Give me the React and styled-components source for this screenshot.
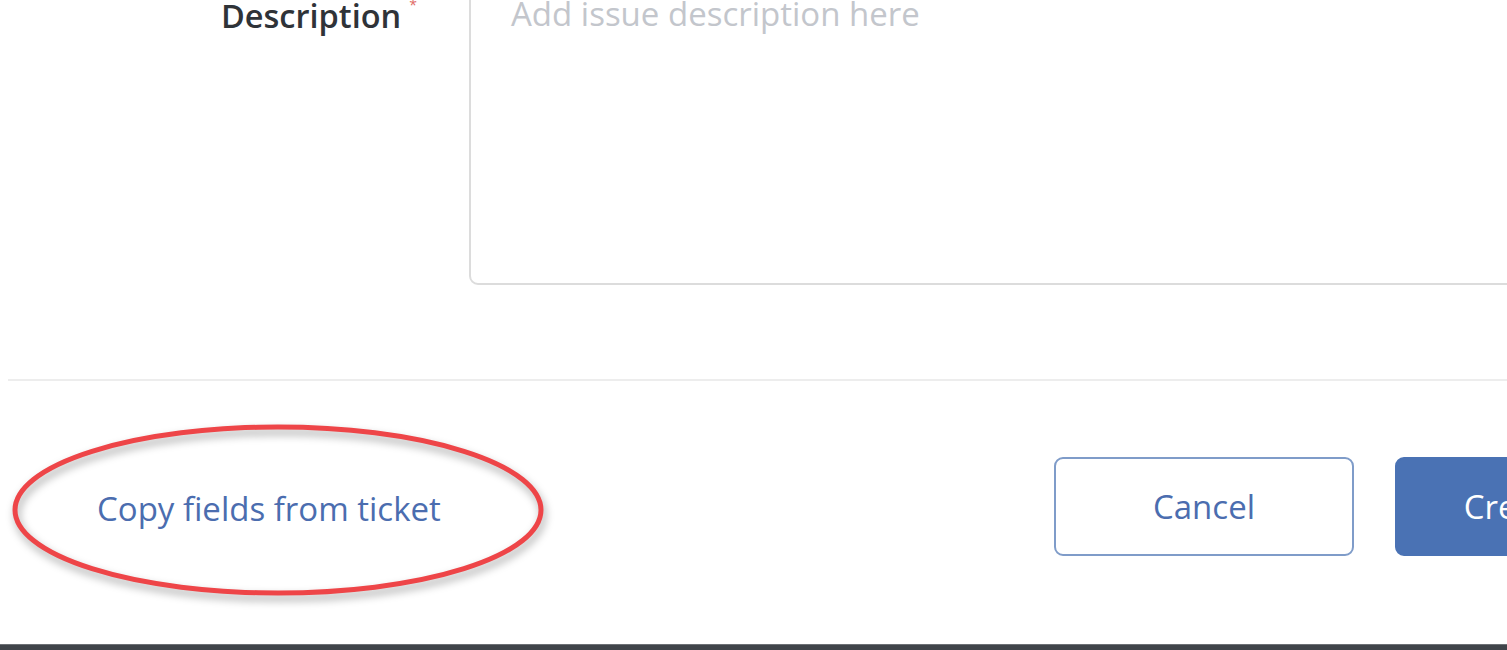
import React from "react";
import styled, { createGlobalStyle } from "styled-components";

const GlobalStyle = createGlobalStyle`
  html, body {
    margin: 0;
    padding: 0;
    background: #fff;
    overflow: hidden;
  }
  body {
    font-family: "Open Sans", "Noto Sans", sans-serif;
    color: #333;
  }
`;

const Page = styled.div`
  position: relative;
  width: 1507px;
  height: 650px;
  overflow: hidden;
  display: flex;
  flex-direction: column;
`;

const Modal = styled.div`
  flex: 1;
  width: 1800px;
  margin-left: 8px;
  display: flex;
  flex-direction: column;
`;

const FieldRow = styled.div`
  display: flex;
  align-items: flex-start;
  margin-top: -36px;
  padding-bottom: 94px;
  border-bottom: 2px solid #ededed;
`;

const Label = styled.label`
  width: 400px;
  box-sizing: border-box;
  padding-left: 213px;
  padding-top: 29px;
  font-size: 32.5px;
  font-weight: 600;
  color: #2f3338;
  display: flex;
  align-items: flex-start;

  span {
    color: #e06a66;
    font-size: 14px;
    line-height: 1;
    font-weight: 400;
    margin-left: 8px;
    margin-top: 5px;
  }
`;

const TextArea = styled.textarea`
  margin-left: 61px;
  width: 1300px;
  height: 321px;
  box-sizing: border-box;
  border: 2px solid #dcdcdc;
  border-radius: 9px;
  padding: 25px 40px;
  font-family: "Open Sans", "Noto Sans", sans-serif;
  font-size: 33px;
  resize: none;
  outline: none;

  &::placeholder {
    color: #c3c6cc;
  }
`;

const Footer = styled.div`
  flex: 1;
  display: flex;
  align-items: flex-start;
  padding-left: 89px;
  padding-top: 76px;
`;

const LinkButton = styled.a`
  font-size: 33px;
  line-height: 99px;
  color: #4b6daf;
  text-decoration: none;
  cursor: pointer;
  margin-top: 2px;
`;

const Actions = styled.div`
  display: flex;
  gap: 41px;
  margin-left: auto;
  margin-right: 113px;
`;

const Button = styled.button`
  width: 300px;
  height: 99px;
  box-sizing: border-box;
  border-radius: 9px;
  padding: ${(p) => (p.$primary ? "0 0 0 26px" : "0")};
  font-family: "Open Sans", "Noto Sans", sans-serif;
  font-size: 33px;
  white-space: nowrap;
  cursor: pointer;
  border: 2px solid ${(p) => (p.$primary ? "#4a72b4" : "#7f9cc9")};
  background: ${(p) => (p.$primary ? "#4a72b4" : "#fff")};
  color: ${(p) => (p.$primary ? "#fff" : "#4b6daf")};
`;

const BottomBar = styled.div`
  height: 5px;
  border-top: 1px solid #6d7075;
  background: #40444a;
`;

const Annotation = styled.svg`
  position: absolute;
  left: 0;
  top: 410px;
  overflow: visible;
  filter: drop-shadow(2px 5px 4px rgba(0, 0, 0, 0.35));
  pointer-events: none;
`;

export default function App() {
  return (
    <>
      <GlobalStyle />
      <Page>
        <Modal>
          <FieldRow>
            <Label>
              Description<span>*</span>
            </Label>
            <TextArea placeholder="Add issue description here" />
          </FieldRow>
          <Footer>
            <LinkButton>Copy fields from ticket</LinkButton>
            <Actions>
              <Button>Cancel</Button>
              <Button $primary>Create issue</Button>
            </Actions>
          </Footer>
        </Modal>
        <BottomBar />
        <Annotation width="560" height="200">
          <ellipse
            cx="278"
            cy="100"
            rx="263"
            ry="83"
            fill="none"
            stroke="#ee4548"
            strokeWidth="5"
          />
        </Annotation>
      </Page>
    </>
  );
}
